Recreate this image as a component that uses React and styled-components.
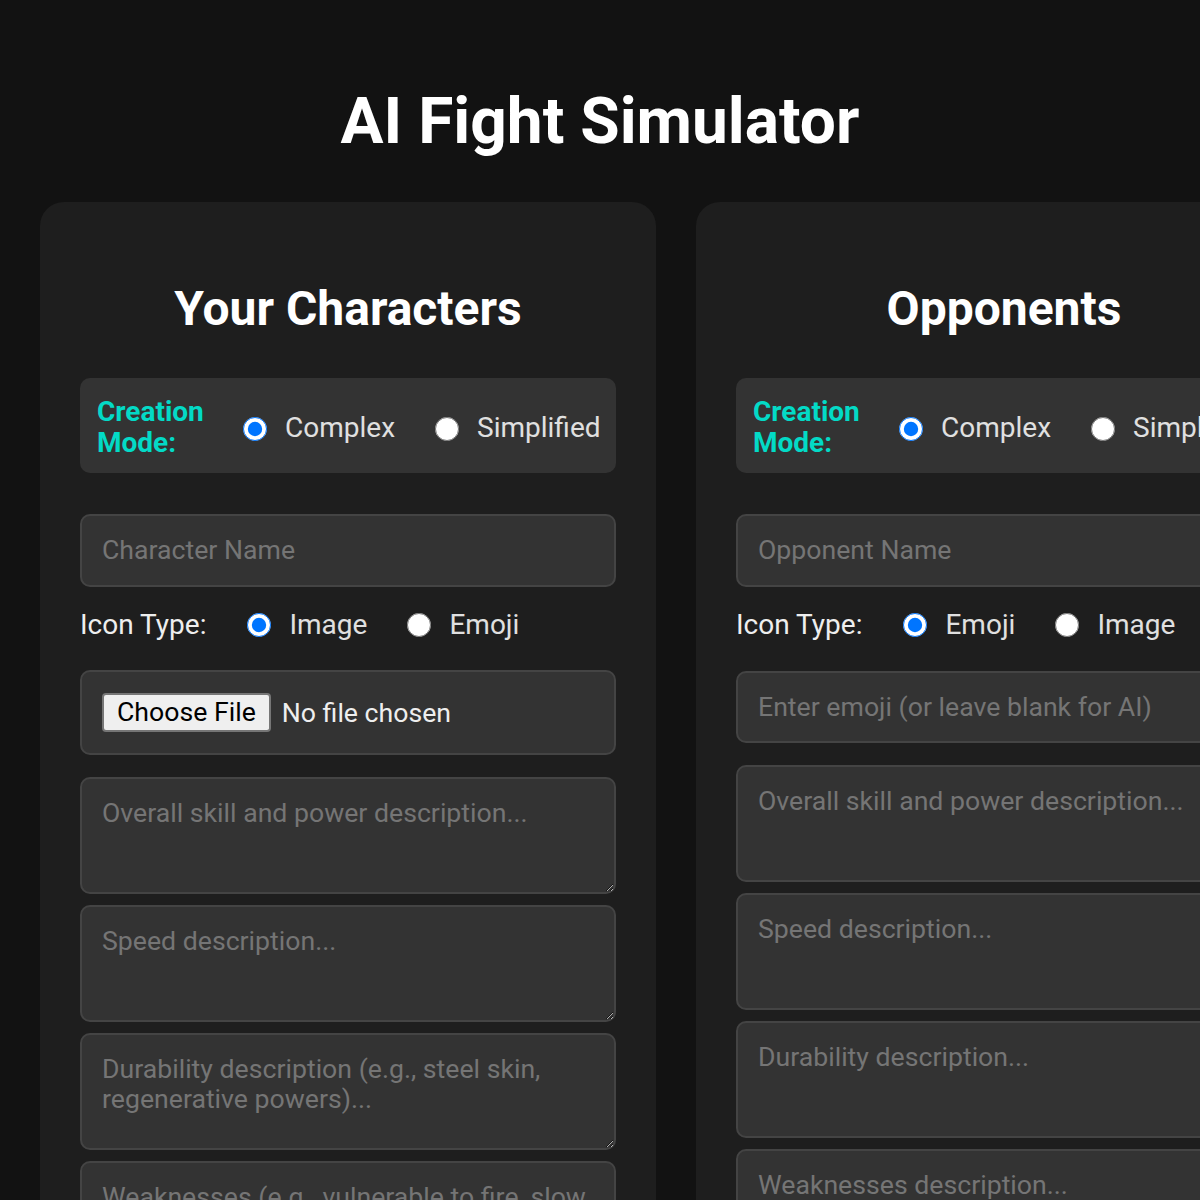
import React from "react";
import styled, { createGlobalStyle } from "styled-components";

const Global = createGlobalStyle`
  html, body { margin: 0; padding: 0; background: #121212; overflow: hidden; }
  body { font-family: Roboto, "Noto Sans", sans-serif; color: #e0e0e0; }
  * { box-sizing: border-box; }
`;

const Page = styled.div`
  width: 1400px;
  padding-top: 84px;
`;

const Title = styled.h1`
  width: 1200px;
  margin: 0;
  text-align: center;
  font-size: 64px;
  font-weight: 700;
  line-height: 75px;
  color: #ffffff;
`;

const Columns = styled.div`
  display: flex;
  gap: 40px;
  padding: 0 40px;
  margin-top: 43px;
`;

const Panel = styled.section`
  flex: 0 0 616px;
  width: 616px;
  min-height: 1100px;
  background: #1e1e1e;
  border-radius: 24px;
  padding: 40px;
  display: flex;
  flex-direction: column;
`;

const PanelTitle = styled.h2`
  margin: 38px 0 40px;
  text-align: center;
  font-size: 48px;
  line-height: 57.6px;
  font-weight: 700;
  color: #ffffff;
`;

const ModeBox = styled.div`
  display: flex;
  align-items: center;
  gap: 30px;
  background: #333333;
  border-radius: 10px;
  padding: 18px 16px 14px 17px;
  height: 95px;
`;

const ModeLabel = styled.div`
  width: 116px;
  flex-shrink: 0;
  color: #03dac6;
  font-weight: 700;
  font-size: 28px;
  line-height: 31px;
`;

const RadioGroup = styled.div`
  display: flex;
  align-items: center;
  gap: ${(p) => p.$gap || 41}px;
`;

const Option = styled.label`
  display: flex;
  align-items: center;
  gap: 18px;
  font-size: 28px;
  color: #e0e0e0;
  white-space: nowrap;
`;

const Radio = styled.input.attrs({ type: "radio" })`
  width: 24px;
  height: 24px;
  margin: ${(p) => p.$drop || 0}px 0 0 0;
  flex-shrink: 0;
`;

const fieldBase = `
  width: 100%;
  background: #333333;
  border: 2px solid #444444;
  border-radius: 10px;
  color: #e0e0e0;
  font-family: Roboto, "Noto Sans", sans-serif;
  font-size: 26.67px;
  padding: 0 20px;
  outline: none;
  &::placeholder { color: #757575; }
`;

const TextInput = styled.input`
  ${fieldBase}
  height: ${(p) => p.$h || 73}px;
  margin-top: ${(p) => p.$mt || 0}px;
`;

const IconRow = styled.div`
  display: flex;
  align-items: center;
  gap: 41px;
  height: 38px;
  margin: 19px 0 26px;
`;

const RowLabel = styled.span`
  font-size: 28px;
  color: #eeeeee;
`;

const FileInput = styled.input.attrs({ type: "file" })`
  ${fieldBase}
  height: 85px;
  padding: 21px 20px;
  color: #eeeeee;
  &::file-selector-button {
    font-family: Roboto, "Noto Sans", sans-serif;
    font-size: 26.67px;
    color: #000;
    background: #efefef;
    border: 2px solid #767676;
    border-radius: 4px;
    height: 39px;
    padding: 0 13px;
    margin-right: 11px;
  }
`;

const TextArea = styled.textarea`
  ${fieldBase}
  height: 117px;
  line-height: 30px;
  padding: 19px 20px;
  resize: vertical;
  margin-top: ${(p) => p.$mt ?? 11}px;
  display: block;
`;

function CharacterPanel({ title, namePlaceholder, iconFirst, isYou, textareas }) {
  const group = title.replace(/\s/g, "");
  return (
    <Panel>
      <PanelTitle>{title}</PanelTitle>
      <ModeBox>
        <ModeLabel>Creation Mode:</ModeLabel>
        <RadioGroup $gap={40}>
          <Option>
            <Radio name={group + "mode"} defaultChecked $drop={3} />
            Complex
          </Option>
          <Option>
            <Radio name={group + "mode"} $drop={3} />
            Simplified
          </Option>
        </RadioGroup>
      </ModeBox>
      <TextInput placeholder={namePlaceholder} $mt={41} />
      <IconRow>
        <RowLabel>Icon Type:</RowLabel>
        <RadioGroup $gap={40}>
          <Option>
            <Radio name={group + "icon"} defaultChecked />
            {iconFirst}
          </Option>
          <Option>
            <Radio name={group + "icon"} />
            {iconFirst === "Image" ? "Emoji" : "Image"}
          </Option>
        </RadioGroup>
      </IconRow>
      {isYou ? (
        <FileInput />
      ) : (
        <TextInput placeholder="Enter emoji (or leave blank for AI)" $mt={1} $h={72} />
      )}
      {textareas.map((t, i) => (
        <TextArea key={i} placeholder={t} $mt={i === 0 ? 22 : 11} />
      ))}
    </Panel>
  );
}

export default function App() {
  return (
    <>
      <Global />
      <Page>
        <Title>AI Fight Simulator</Title>
        <Columns>
          <CharacterPanel
            title="Your Characters"
            namePlaceholder="Character Name"
            iconFirst="Image"
            isYou
            textareas={[
              "Overall skill and power description...",
              "Speed description...",
              "Durability description (e.g., steel skin, regenerative powers)...",
              "Weaknesses (e.g., vulnerable to fire, slow reflexes)...",
            ]}
          />
          <CharacterPanel
            title="Opponents"
            namePlaceholder="Opponent Name"
            iconFirst="Emoji"
            textareas={[
              "Overall skill and power description...",
              "Speed description...",
              "Durability description...",
              "Weaknesses description...",
            ]}
          />
        </Columns>
      </Page>
    </>
  );
}
